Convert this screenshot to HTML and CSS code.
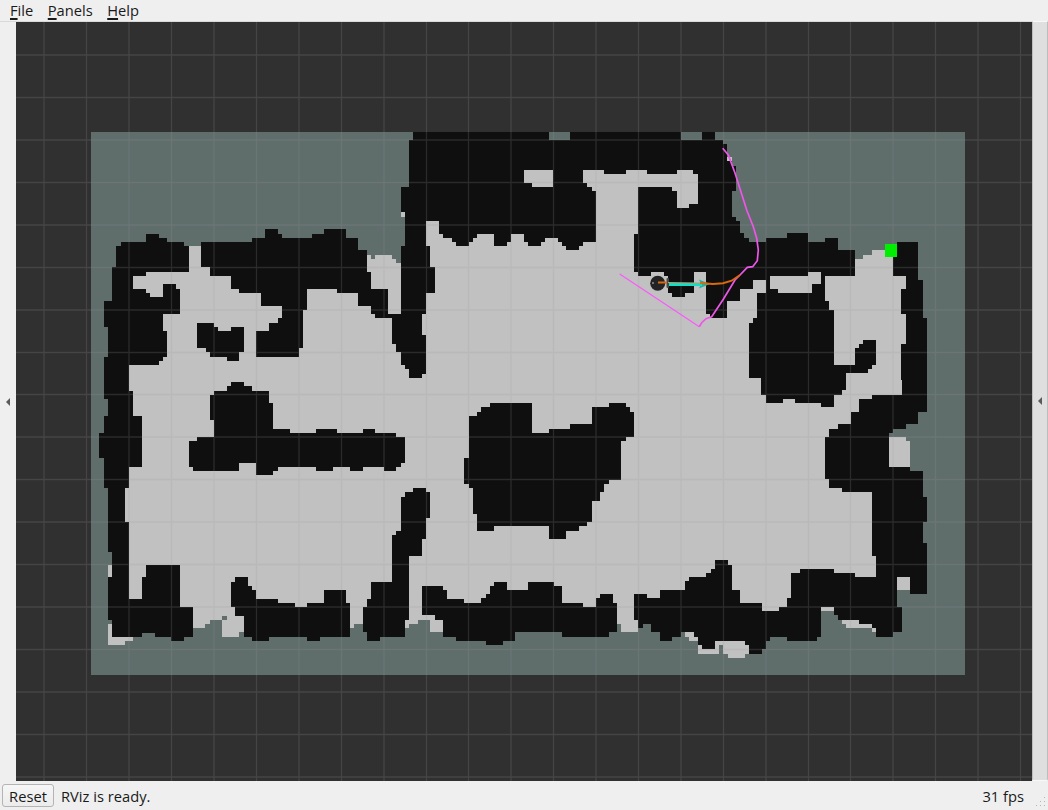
FILE: index.html
```html
<!DOCTYPE html>
<html lang="en">
<head>
<meta charset="utf-8">
<title>RViz</title>
<link rel="stylesheet" href="styles.css">
</head>
<body>
<div class="window">
  <nav class="menubar">
    <span class="menu"><u>F</u>ile</span>
    <span class="menu"><u>P</u>anels</span>
    <span class="menu"><u>H</u>elp</span>
  </nav>
  <main class="workspace">
    <div class="handle handle-left"><span class="arrow"></span></div>
    <svg class="viewport" viewBox="16 22 1016 759" width="1016" height="759" shape-rendering="crispEdges">
      <rect class="map-unknown" x="91" y="132" width="874" height="543"/>
      <polygon class="map-wall" points="413,132 549,132 549,140 570,140 570,132 681,132 681,140 702,140 702,132 715,132 715,140 723,140 723,144 727,144 727,161 732,161 732,166 736,166 736,191 732,191 732,217 736,217 736,221 740,221 740,233 744,233 744,238 749,238 749,242 766,242 766,238 787,238 787,233 808,233 808,242 825,242 825,238 838,238 838,250 855,250 855,259 863,259 863,255 872,255 872,250 897,250 897,242 918,242 918,280 923,280 923,318 927,318 927,412 918,412 918,424 906,424 906,429 893,429 893,433 889,433 889,437 906,437 906,441 910,441 910,471 923,471 923,497 927,497 927,522 923,522 923,543 927,543 927,594 910,594 910,590 897,590 897,607 902,607 902,632 893,632 893,637 876,637 876,632 872,632 872,628 846,628 846,624 842,624 842,620 838,620 838,615 834,615 834,611 821,611 821,637 817,637 817,641 787,641 787,637 770,637 770,641 766,641 766,649 762,649 762,654 745,654 745,658 728,658 728,654 723,654 723,645 719,645 719,654 698,654 698,641 689,641 689,637 685,637 685,632 681,632 681,637 672,637 672,641 660,641 660,632 651,632 651,624 643,624 643,628 638,628 638,632 621,632 621,624 617,624 617,632 609,632 609,637 562,637 562,632 515,632 515,641 503,641 503,645 486,645 486,641 456,641 456,637 443,637 443,632 430,632 430,620 418,620 418,624 409,624 409,628 405,628 405,637 380,637 380,641 367,641 367,632 363,632 363,624 354,624 354,628 350,628 350,637 320,637 320,641 307,641 307,637 269,637 269,641 252,641 252,637 244,637 244,632 239,632 239,637 222,637 222,620 210,620 210,624 205,624 205,628 193,628 193,637 184,637 184,641 171,641 171,637 155,637 155,633 142,633 142,637 133,637 133,641 125,641 125,645 108,645 108,624 112,624 112,620 108,620 108,565 112,565 112,552 108,552 108,488 104,488 104,458 99,458 99,433 104,433 104,416 108,416 108,399 104,399 104,357 108,357 108,327 104,327 104,301 112,301 112,267 116,267 116,246 121,246 121,242 146,242 146,234 159,234 159,238 167,238 167,242 184,242 184,246 201,246 201,242 252,242 252,238 265,238 265,229 278,229 278,234 282,234 282,238 312,238 312,234 324,234 324,229 346,229 346,238 358,238 358,250 367,250 367,255 371,255 371,259 375,259 375,255 392,255 392,259 396,259 396,263 401,263 401,246 405,246 405,217 401,217 401,187 409,187 409,140 413,140"/>
      <polygon class="map-free" points="133,276 146,276 146,272 189,272 189,246 201,246 201,267 210,267 210,276 231,276 231,289 239,289 239,293 261,293 261,306 282,306 282,318 278,318 278,323 269,323 269,331 256,331 256,357 299,357 299,348 303,348 303,310 307,310 307,289 337,289 337,293 358,293 358,306 371,306 371,314 375,314 375,318 392,318 392,344 396,344 396,352 401,352 401,365 405,365 405,369 409,369 409,378 422,378 422,374 426,374 426,335 422,335 422,314 426,314 426,293 435,293 435,267 430,267 430,246 426,246 426,221 439,221 439,234 443,234 443,238 452,238 452,242 456,242 456,246 469,246 469,242 473,242 473,238 477,238 477,234 494,234 494,246 507,246 507,242 511,242 511,234 524,234 524,242 528,242 528,246 541,246 541,242 545,242 545,238 558,238 558,242 562,242 562,246 566,246 566,250 579,250 579,246 583,246 583,242 596,242 596,191 592,191 592,187 587,187 587,183 583,183 583,170 604,170 604,174 626,174 626,170 647,170 647,174 677,174 677,170 693,170 693,174 698,174 698,204 689,204 689,208 677,208 677,191 672,191 672,187 638,187 638,234 634,234 634,272 638,272 638,276 651,276 651,272 664,272 664,276 668,276 668,293 672,293 672,297 685,297 685,293 694,293 694,272 706,272 706,314 710,314 710,318 727,318 727,301 740,301 740,289 753,289 753,280 766,280 766,293 757,293 757,318 753,318 753,323 749,323 749,378 761,378 761,395 766,395 766,403 783,403 783,399 795,399 795,403 821,403 821,407 834,407 834,395 842,395 842,390 846,390 846,373 868,373 868,369 872,369 872,365 876,365 876,340 863,340 863,344 859,344 859,348 855,348 855,365 834,365 834,310 829,310 829,301 825,301 825,276 855,276 855,259 863,259 863,255 872,255 872,250 893,250 893,276 906,276 906,289 901,289 901,314 906,314 906,344 901,344 901,380 902,380 902,395 872,395 872,399 859,399 859,412 851,412 851,424 838,424 838,429 829,429 829,437 825,437 825,479 829,479 829,488 842,488 842,492 872,492 872,556 876,556 876,577 855,577 855,573 834,573 834,569 800,569 800,573 791,573 791,598 787,598 787,607 779,607 779,611 762,611 762,603 740,603 740,590 732,590 732,565 728,565 728,560 715,560 715,569 711,569 711,573 706,573 706,577 689,577 689,581 685,581 685,590 660,590 660,598 647,598 647,594 634,594 634,620 638,620 638,632 621,632 621,624 617,624 617,603 613,603 613,594 600,594 600,598 596,598 596,607 583,607 583,603 562,603 562,586 554,586 554,582 528,582 528,590 507,590 507,582 494,582 494,586 490,586 490,594 486,594 486,598 481,598 481,603 464,603 464,599 447,599 447,590 443,590 443,586 422,586 422,615 435,615 435,620 443,620 443,632 430,632 430,620 418,620 418,624 409,624 409,628 405,628 405,620 409,620 409,556 422,556 422,539 426,539 426,518 430,518 430,492 426,492 426,488 413,488 413,492 405,492 405,497 401,497 401,531 396,531 396,535 392,535 392,582 371,582 371,599 367,599 367,607 363,607 363,624 354,624 354,628 350,628 350,603 346,603 346,590 324,590 324,603 307,603 307,607 295,607 295,603 278,603 278,599 256,599 256,590 252,590 252,586 248,586 248,577 235,577 235,582 231,582 231,607 235,607 235,616 244,616 244,632 239,632 239,637 222,637 222,620 210,620 210,624 205,624 205,628 193,628 193,607 180,607 180,565 146,565 146,577 142,577 142,599 129,599 129,522 125,522 125,488 129,488 129,467 142,467 142,416 133,416 133,391 129,391 129,365 159,365 159,361 163,361 163,357 167,357 167,331 163,331 163,314 180,314 180,289 176,289 176,284 163,284 163,297 150,297 150,293 146,293 146,289 133,289"/>
      <polygon class="map-free" points="367,255 371,255 371,259 375,259 375,255 392,255 392,259 396,259 396,263 401,263 401,314 388,314 388,289 371,289 371,272 367,272"/>
      <polygon class="map-free" points="524,170 553,170 553,187 532,187 532,183 524,183"/>
      <polygon class="map-free" points="770,276 808,276 808,272 821,272 821,284 812,284 812,293 778,293 778,289 770,289"/>
      <polygon class="map-free" points="889,437 906,437 906,441 910,441 910,467 889,467"/>
      <polygon class="map-free" points="897,577 910,577 910,590 897,590"/>
      <polygon class="map-free" points="821,607 834,607 834,611 821,611"/>
      <polygon class="map-free" points="842,620 859,620 859,624 872,624 872,628 876,628 876,632 872,632 872,628 846,628 846,624 842,624"/>
      <polygon class="map-free" points="685,632 694,632 694,637 698,637 698,641 689,641 689,637 685,637"/>
      <polygon class="map-free" points="698,645 702,645 702,649 715,649 715,641 745,641 745,645 749,645 749,654 745,654 745,658 728,658 728,654 723,654 723,645 719,645 719,654 698,654"/>
      <polygon class="map-free" points="108,624 112,624 112,637 133,637 133,641 125,641 125,645 108,645"/>
      <rect class="map-free" x="108" y="565" width="4" height="12"/>
      <rect class="map-free" x="401" y="212" width="4" height="5"/>
      <rect class="map-free" x="727" y="157" width="5" height="4"/>
      <rect class="map-unknown" x="222" y="616" width="5" height="4"/>
      <polygon class="map-wall" points="197,323 214,323 214,327 218,327 218,331 231,331 231,327 244,327 244,352 239,352 239,361 227,361 227,357 210,357 210,352 206,352 206,348 197,348"/>
      <polygon class="map-wall" points="231,382 244,382 244,386 252,386 252,391 269,391 269,403 273,403 273,429 290,429 290,433 316,433 316,429 337,429 337,433 363,433 363,429 375,429 375,433 396,433 396,437 405,437 405,463 401,463 401,467 396,467 396,471 384,471 384,467 363,467 363,471 350,471 350,467 333,467 333,471 316,471 316,467 278,467 278,471 273,471 273,475 256,475 256,463 239,463 239,471 193,471 193,467 189,467 189,441 197,441 197,437 214,437 214,420 210,420 210,395 214,395 214,391 227,391 227,386 231,386"/>
      <polygon class="map-wall" points="490,403 532,403 532,433 549,433 549,429 570,429 570,424 592,424 592,407 609,407 609,403 626,403 626,407 630,407 630,412 634,412 634,437 626,437 626,441 621,441 621,480 609,480 609,484 604,484 604,492 600,492 600,501 592,501 592,522 587,522 587,526 579,526 579,531 566,531 566,539 549,539 549,526 494,526 494,531 477,531 477,514 473,514 473,488 469,488 469,484 464,484 464,458 469,458 469,416 477,416 477,412 481,412 481,407 490,407"/>
      <path class="grid" d="M44 22V781M86.500 22V781M129 22V781M171.500 22V781M214 22V781M256.500 22V781M299 22V781M341.500 22V781M384 22V781M426.500 22V781M468.500 22V781M511 22V781M553.500 22V781M596 22V781M638.500 22V781M681 22V781M723.500 22V781M766 22V781M808.500 22V781M850.500 22V781M893 22V781M935.500 22V781M978 22V781M1020.500 22V781M16 55H1032M16 97.500H1032M16 140H1032M16 182.500H1032M16 225H1032M16 267.500H1032M16 310H1032M16 352.500H1032M16 394.500H1032M16 437H1032M16 479.500H1032M16 522H1032M16 564.500H1032M16 607H1032M16 649.500H1032M16 692H1032M16 734.500H1032M16 777H1032"/>
      <rect class="goal" x="884.500" y="244" width="12.500" height="12.500"/>
      <polyline class="path-global-thin" points="619.700,274 699.300,326.700"/>
      <polyline class="path-global" points="699.300,326.700 701.700,322.700 706,318.700 711.700,316.700 723.300,299.300 735,280 740,275 747.300,267.300 752.700,266.700 757.300,260.700 758.300,250 756.700,238.300 753.300,226.700 746.700,210 735,173 728.300,155 722.700,148.300"/>
      <circle class="robot" cx="657.700" cy="283.300" r="7.500"/>
      <circle class="robot-mark" cx="653" cy="283" r="0.900"/>
      <rect class="robot-bar" x="666.500" y="278" width="2.500" height="10" rx="1"/>
      <polygon class="pose-head" points="699,279.500 710,284 699,288.500 701,284"/>
      <line class="pose-shaft" x1="669" y1="284.500" x2="702" y2="284.500"/>
      <line class="plan-faint" x1="668" y1="282.500" x2="700" y2="283"/>
      <line class="plan" x1="658" y1="282.500" x2="667" y2="282.500"/>
      <polyline class="plan" points="700,283 713,284 723,283.300 731.700,280.700 740,275"/>
    </svg>
    <div class="handle handle-right"><span class="arrow"></span></div>
  </main>
  <footer class="statusbar">
    <button class="reset" type="button">Reset</button>
    <span class="status-text">RViz is ready.</span>
    <span class="fps">31 fps</span>
    <svg class="grip" width="11" height="11" viewBox="0 0 11 11">
      <rect x="8" y="0" width="1" height="1"/><rect x="4" y="4" width="1" height="1"/><rect x="8" y="4" width="1" height="1"/><rect x="0" y="8" width="1" height="1"/><rect x="4" y="8" width="1" height="1"/><rect x="8" y="8" width="1" height="1"/>
    </svg>
  </footer>
</div>
</body>
</html>
```
FILE: styles.css
```css
* { box-sizing: border-box; }
html, body { margin: 0; padding: 0; height: 100%; }
body {
  background: #efefef;
  color: #1a1a1a;
  font-family: "Open Sans", "Noto Sans", sans-serif;
  font-size: 14.7px;
  overflow: hidden;
}
.window { display: flex; flex-direction: column; width: 1048px; height: 810px; }

.menubar {
  display: flex;
  gap: 14.5px;
  height: 22px;
  padding: 0 0 0 10px;
  align-items: center;
  background: #efefef;
  border-bottom: 1px solid #d9d9d9;
  line-height: 21px;
}
.menu { display: block; }
.menu u { text-decoration-thickness: 2px; text-underline-offset: 2px; }

.workspace { display: flex; height: 759px; }
.handle { display: flex; align-items: center; justify-content: center; width: 16px; }
.handle-right {
  background: #dfdfdf;
  border: 1px solid #f9f9f9;
  border-left-color: #bdbdbd;
  border-right-color: #bdbdbd;
  border-bottom-left-radius: 3px;
  border-bottom-right-radius: 3px;
  margin-top: -1px;
}
.arrow {
  display: block;
  width: 0;
  height: 0;
  border-top: 4px solid transparent;
  border-bottom: 4px solid transparent;
  border-right: 4px solid #5a5a5a;
}
.viewport { display: block; flex: none; background: #303030; }

.map-unknown { fill: #5f6d6b; }
.map-free { fill: #c1c1c1; }
.map-wall { fill: #0f0f0f; }
.grid { fill: none; stroke: #999; stroke-opacity: .2; stroke-width: 1.300; shape-rendering: geometricPrecision; }
.goal { fill: #00ee00; }

.path-global-thin, .path-global, .pose-shaft, .plan-faint, .plan { fill: none; shape-rendering: geometricPrecision; }
.path-global-thin { stroke: #ff55ff; stroke-width: 1.100; }
.path-global { stroke: #ee55ea; stroke-width: 1.700; }
.robot { fill: #232323; shape-rendering: geometricPrecision; }
.robot-mark { fill: #9a9a9a; shape-rendering: geometricPrecision; }
.robot-bar { fill: #4a4a4a; shape-rendering: geometricPrecision; }
.pose-head { fill: #1fb3a5; shape-rendering: geometricPrecision; }
.pose-shaft { stroke: #12dfc8; stroke-width: 2.800; }
.plan-faint { stroke: #c79a6a; stroke-width: 1.200; }
.plan { stroke: #d9690f; stroke-width: 2; }

.statusbar {
  position: relative;
  display: flex;
  align-items: center;
  flex: 1;
  padding: 0 24px 0 2px;
  background: #efefef;
}
.reset {
  width: 52px;
  height: 23px;
  margin: 0;
  padding: 0;
  font: inherit;
  color: #1a1a1a;
  background: linear-gradient(#f6f6f6, #ececec);
  border: 1px solid #b4b4b4;
  border-radius: 3px;
}
.status-text { margin-left: 7px; }
.fps { margin-left: auto; }
.grip { position: absolute; right: 1px; bottom: 2px; fill: #b5b5b5; }
```
